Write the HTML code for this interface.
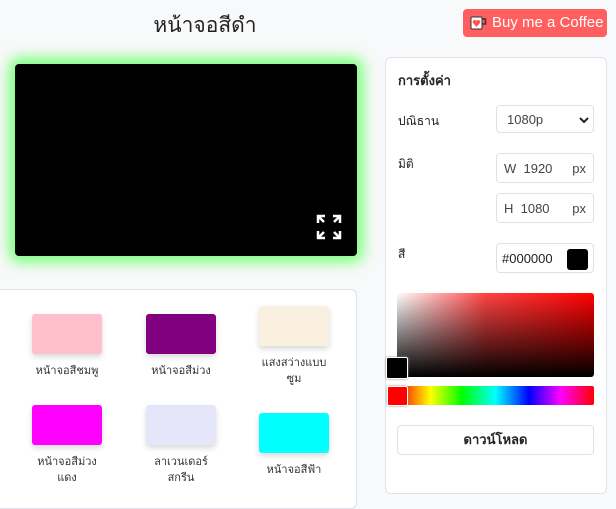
<!DOCTYPE html>
<html><head><meta charset="utf-8"><style>
*{box-sizing:border-box;margin:0;padding:0}
body{width:616px;height:498px;overflow:hidden;background:#f8f9fa;font-family:"Liberation Sans","Noto Sans CJK SC",sans-serif;color:#212529;position:relative}
.abs{position:absolute}
h1{position:absolute;left:0;width:410px;top:9px;text-align:center;font-size:21px;font-weight:500;color:#222}
.btn{left:463px;top:9px;width:144px;height:28px;background:#ff5f5f;border-radius:4px;color:#fff;font-size:15px;line-height:28px;padding-left:29px}
.screen{left:15px;top:64px;width:342px;height:192px;background:#000;border-radius:4px;box-shadow:0 0 14px 6px #7f7}
.card{background:#fff;border:1px solid #dee2e6;border-radius:6px}
.sw{width:70px;height:40px;border-radius:3px;box-shadow:0 3px 6px rgba(0,0,0,.15)}
.lbl{font-size:11px;color:#333;text-align:center;width:90px;line-height:16px}
.in{border:1px solid #dee2e6;border-radius:4px;background:#fff;font-size:13px;color:#444}
.lab{font-size:12px;color:#222;left:398px}
</style></head><body>
<h1>หน้าจอสีดำ</h1>
<div class="abs btn"><svg class="abs" style="left:7px;top:7px" width="18" height="14" viewBox="0 0 18 14"><rect x="1" y="1" width="11" height="12" rx="1" fill="#fff" stroke="#333"/><path d="M12 3h3.5v5H12" fill="none" stroke="#333" stroke-width="1.5"/><path d="M6.5 11L3 7a1.6 1.6 0 0 1 3.5-2a1.6 1.6 0 0 1 3.5 2z" fill="#f55"/></svg>Buy me a Coffee</div>
<div class="abs screen"><svg class="abs" style="left:301px;top:150px" width="26" height="26" viewBox="0 0 26 26" fill="none" stroke="#fff" stroke-width="2.5"><path d="M2 9V2h7M2 2l6 6M24 9V2h-7M24 2l-6 6M2 17v7h7M2 24l6-6M24 17v7h-7M24 24l-6-6"/></svg></div>
<div class="abs card" style="left:-6px;top:289px;width:363px;height:220px"></div>
<div class="abs sw" style="left:32px;top:314px;background:#ffc0cb"></div>
<div class="abs sw" style="left:146px;top:314px;background:#800080"></div>
<div class="abs sw" style="left:259px;top:306px;background:#faf0e0"></div>
<div class="abs lbl" style="left:22px;top:363px">หน้าจอสีชมพู</div>
<div class="abs lbl" style="left:136px;top:363px">หน้าจอสีม่วง</div>
<div class="abs lbl" style="left:249px;top:355px">แสงสว่างแบบ<br>ซูม</div>
<div class="abs sw" style="left:32px;top:405px;background:#f0f"></div>
<div class="abs sw" style="left:146px;top:405px;background:#e6e6fa"></div>
<div class="abs sw" style="left:259px;top:413px;background:#0ff"></div>
<div class="abs lbl" style="left:22px;top:454px">หน้าจอสีม่วง<br>แดง</div>
<div class="abs lbl" style="left:136px;top:454px">ลาเวนเดอร์<br>สกรีน</div>
<div class="abs lbl" style="left:249px;top:462px">หน้าจอสีฟ้า</div>
<div class="abs card" style="left:385px;top:57px;width:222px;height:437px"></div>
<div class="abs" style="left:398px;top:70px;font-size:13px;font-weight:bold">การตั้งค่า</div>
<div class="abs lab" style="top:112px">ปณิธาน</div>
<div class="abs lab" style="top:155px">มิติ</div>
<div class="abs lab" style="top:245px">สี</div>
<div class="abs in" style="left:496px;top:105px;width:98px;height:28px;padding:6px 0 0 10px">1080p<svg class="abs" style="right:4px;top:10px" width="10" height="8" viewBox="0 0 10 8"><path d="M1 2l4 4 4-4" fill="none" stroke="#222" stroke-width="2"/></svg></div>
<div class="abs in" style="left:496px;top:153px;width:98px;height:30px;padding:7px 0 0 7px">W&nbsp; 1920<span class="abs" style="right:7px;top:7px">px</span></div>
<div class="abs in" style="left:496px;top:193px;width:98px;height:30px;padding:7px 0 0 7px">H&nbsp; 1080<span class="abs" style="right:7px;top:7px">px</span></div>
<div class="abs in" style="left:496px;top:243px;width:98px;height:30px;padding:7px 0 0 5px;color:#222">#000000<div class="abs" style="right:5px;top:5px;width:21px;height:21px;background:#000;border-radius:3px"></div></div>
<div class="abs" style="left:397px;top:293px;width:197px;height:84px;border-radius:3px;background:linear-gradient(to top,#000,rgba(0,0,0,.6) 40%,transparent),linear-gradient(to right,#fff,#f44 45%,#f00)"></div>
<div class="abs" style="left:386px;top:357px;width:22px;height:22px;background:#000;border:1px solid #fff;box-shadow:0 0 2px #888;border-radius:2px"></div>
<div class="abs" style="left:397px;top:386px;width:197px;height:19px;border-radius:2px;background:linear-gradient(to right,#f00,#ff0 17%,#0f0 33%,#0ff 50%,#00f 67%,#f0f 83%,#f00)"></div>
<div class="abs" style="left:387px;top:386px;width:21px;height:20px;background:#f00;border:1px solid #fff;box-shadow:0 0 2px #888;border-radius:2px"></div>
<div class="abs" style="left:397px;top:425px;width:197px;height:30px;border:1px solid #dee2e6;border-radius:4px;background:#fff;text-align:center;font-size:13px;font-weight:bold;line-height:28px">ดาวน์โหลด</div>
</body></html>
